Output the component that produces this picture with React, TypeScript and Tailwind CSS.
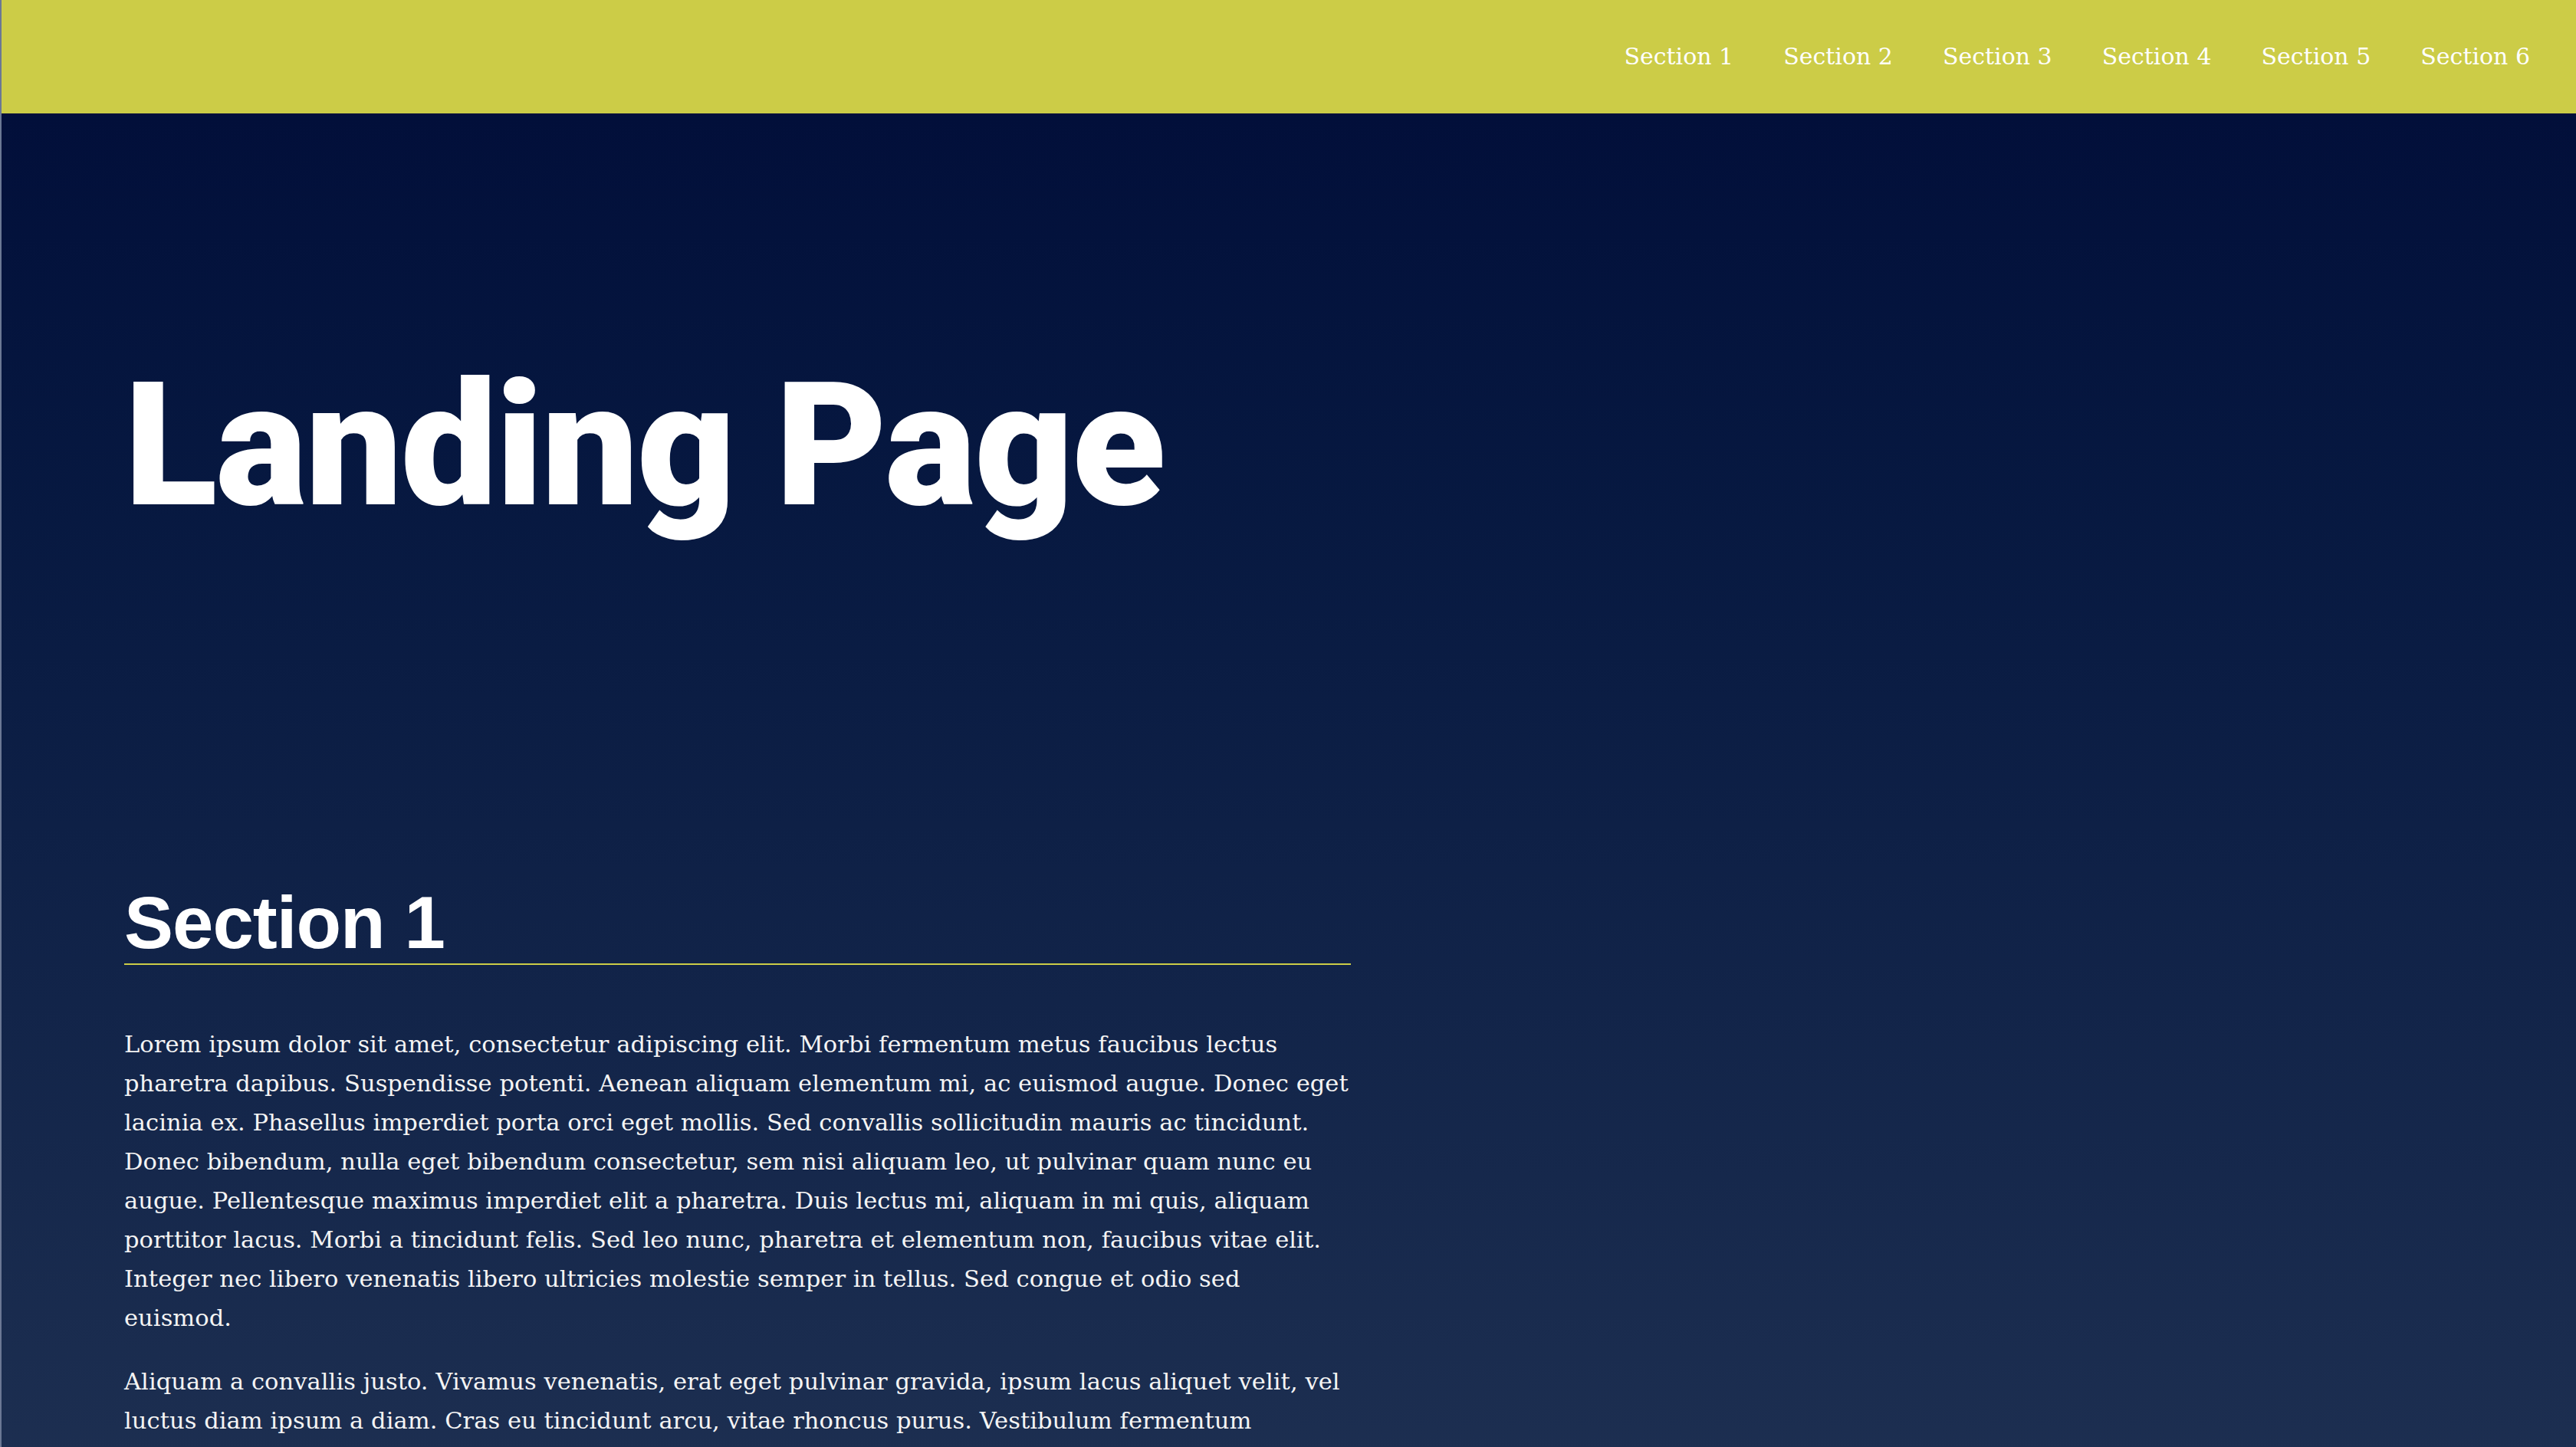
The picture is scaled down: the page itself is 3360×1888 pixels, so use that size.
import React from "react";

const sections = ["Section 1", "Section 2", "Section 3", "Section 4", "Section 5", "Section 6"];

const serif = "font-['DejaVu_Serif','Liberation_Serif',serif]";

const NavBar: React.FC = () => (
  <header className="h-[148px] shrink-0 bg-[#cccc47] flex items-center justify-end pr-[60px]">
    <nav className={`flex items-center gap-[65px] ${serif} text-[30px] text-white`}>
      {sections.map((s) => (
        <a key={s} href={`#${s.replace(" ", "-").toLowerCase()}`} className="leading-none">
          {s}
        </a>
      ))}
    </nav>
  </header>
);

const App: React.FC = () => {
  return (
    <div className="h-screen w-full overflow-hidden flex flex-col bg-[#020f3a] border-l-2 border-[#6b7894]">
      <NavBar />
      <main className="flex-1 bg-linear-to-b from-[#020f3a] to-[#1d2f51] pl-[160px]">
        <h1 className="mt-[322px] text-[224px] leading-none font-black tracking-[-2px] text-white font-['Roboto','Lato',sans-serif]">
          Landing Page
        </h1>
        <section id="section-1" className="w-[1600px] mt-[462px]">
          <h2 className="text-[96px] leading-none font-bold tracking-[-1px] text-white pb-[5px] border-b-2 border-[#cccc47] font-['Liberation_Sans','Arial',sans-serif]">
            Section 1
          </h2>
          <div className={`mt-[78px] ${serif} text-[30.5px] leading-[51px] tracking-[0.06px] text-[#f4f4f4] flex flex-col gap-[32px]`}>
            <p>
              Lorem ipsum dolor sit amet, consectetur adipiscing elit. Morbi fermentum metus faucibus lectus
              pharetra dapibus. Suspendisse potenti. Aenean aliquam elementum mi, ac euismod augue. Donec eget
              lacinia ex. Phasellus imperdiet porta orci eget mollis. Sed convallis sollicitudin mauris ac
              tincidunt. Donec bibendum, nulla eget bibendum consectetur, sem nisi aliquam leo, ut pulvinar quam
              nunc eu augue. Pellentesque maximus imperdiet elit a pharetra. Duis lectus mi, aliquam in mi quis,
              aliquam porttitor lacus. Morbi a tincidunt felis. Sed leo nunc, pharetra et elementum non, faucibus
              vitae elit. Integer nec libero venenatis libero ultricies molestie semper in tellus. Sed congue et
              odio sed euismod.
            </p>
            <p>
              Aliquam a convallis justo. Vivamus venenatis, erat eget pulvinar gravida, ipsum lacus aliquet velit,
              vel luctus diam ipsum a diam. Cras eu tincidunt arcu, vitae rhoncus purus. Vestibulum fermentum
              consectetur porttitor. Suspendisse imperdiet porttitor tortor, eget elementum tortor mollis non.
            </p>
          </div>
        </section>
      </main>
    </div>
  );
};

export default App;
